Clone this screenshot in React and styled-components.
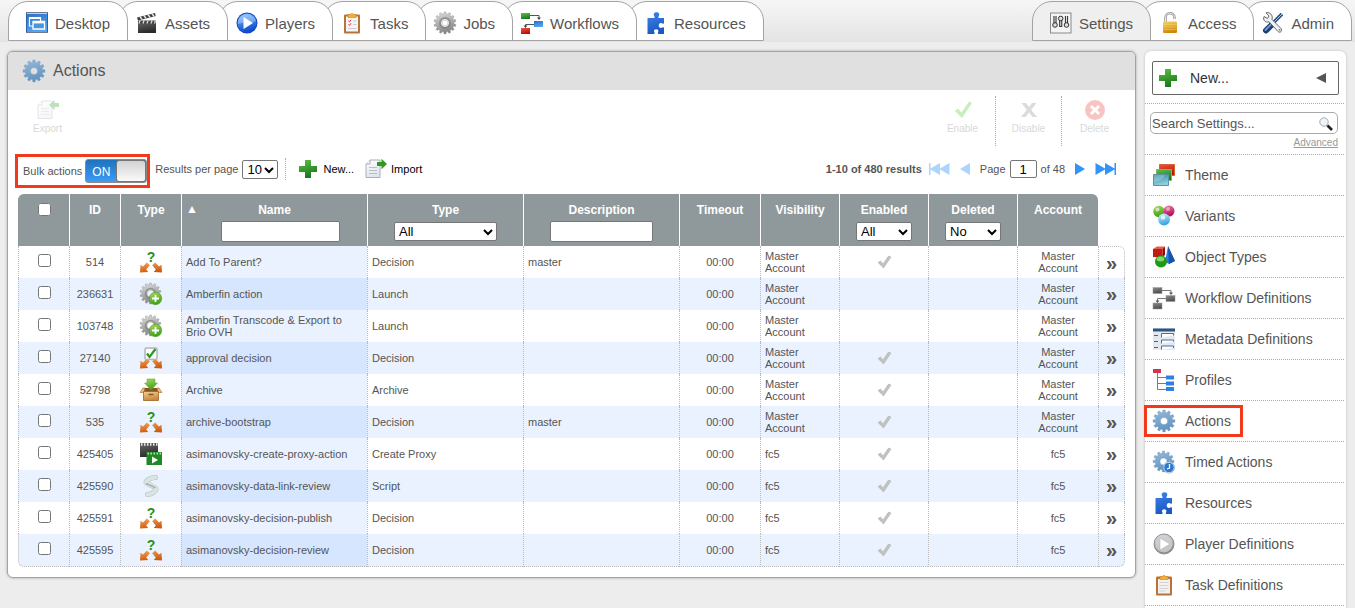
import React, { useState } from 'react';
import styled, { createGlobalStyle, css } from 'styled-components';

const GlobalStyle = createGlobalStyle`
  * {
    box-sizing: border-box;
  }
  body {
    margin: 0;
    background: #ededed;
    color: #555;
    font-family: "Liberation Sans", Arial, sans-serif;
    font-size: 11px;
  }
  button, input, select {
    font-family: inherit;
  }
`;

/* ---------- icons ---------- */

const Svg = styled.svg`
  display: block;
  flex: none;
  overflow: visible;
  width: ${props => props.$w || 22}px;
  height: ${props => props.$h || 22}px;
`;

const gear = (cx, cy, outer, inner, teeth, hole) => {
  const pts = [];
  const step = (Math.PI * 2) / teeth;
  for (let i = 0; i < teeth; i++) {
    const a = i * step - Math.PI / 2;
    [[-0.31, inner], [-0.2, outer], [0.2, outer], [0.31, inner]].forEach(([k, r]) => {
      pts.push(`${(cx + r * Math.cos(a + k * step)).toFixed(2)} ${(cy + r * Math.sin(a + k * step)).toFixed(2)}`);
    });
  }
  return `M${pts.join('L')}Z M${cx - hole} ${cy}a${hole} ${hole} 0 1 0 ${hole * 2} 0a${hole} ${hole} 0 1 0 ${-hole * 2} 0Z`;
};

const gradients = {
  blue: ['#7cc0ff', '#0b4fd0'],
  desk: ['#2f6dc0', '#4fa6f2'],
  steel: ['#9bbbd8', '#5f93c2'],
  silver: ['#e2e2e2', '#868686'],
  green: ['#5cc244', '#1c7a1c'],
  lime: ['#a8dc5a', '#3fa01c'],
  red: ['#f0533f', '#b5120f'],
  gold: ['#f7d560', '#cf8a0c'],
  orange: ['#f4a457', '#cf5a12'],
  dark: ['#6a6a6a', '#2b2b2b'],
  gray: ['#8a8a8a', '#505050'],
  puzzle: ['#3f86ea', '#1b58c4'],
  teal: ['#2f87a3', '#8fd0dc'],
  box: ['#f5cf92', '#c9883d'],
  paper: ['#ffffff', '#dfe5ee'],
  pink: ['#f07fb4', '#b3124f'],
  sky: ['#d4f1ff', '#39a3e4'],
};

const HiddenSvg = styled.svg`
  position: absolute;
`;

const Gradients = () => (
  <HiddenSvg width="0" height="0" aria-hidden="true">
    <defs>
      {Object.entries(gradients).map(([name, [from, to]]) => (
        <linearGradient key={name} id={`g-${name}`} x1="0" y1="0" x2="0.3" y2="1">
          <stop offset="0" stopColor={from} />
          <stop offset="1" stopColor={to} />
        </linearGradient>
      ))}
    </defs>
  </HiddenSvg>
);

const fill = name => `url(#g-${name})`;

// pair of arrows pointing to the lower corners
const splitArrows = (
  <path
    d="M0 21.500l.5-7.800L3 15.500l3.800-4 3 2.800L6.200 18.500l2 2.500zM22 21.500l-.5-7.800-2.500 1.800-3.800-4-3 2.800 3.600 4.200-2 2.500z"
    fill={fill('orange')}
  />
);

const shapes = {
  desktop: (
    <>
      <rect x="0.5" y="0.5" width="21" height="20" fill={fill('desk')} stroke="#2b62a8" />
      <path d="M0 0.5h22M0 20.5h22" stroke="#6d7b8c" />
      <path d="M1 1.5h20" stroke="#b9d4ef" />
      <path d="M3.500 6h11v8h-11z" fill="#3b86d8" stroke="#fff" strokeWidth="1.200" />
      <path d="M3 6h12" stroke="#fff" strokeWidth="2" />
      <path d="M7 9.500h11.500v7.500H7z" fill="#4a94e2" stroke="#fff" strokeWidth="1.300" />
      <path d="M7 10.300h11.500" stroke="#fff" strokeWidth="2.200" />
    </>
  ),
  clapper: (
    <>
      <path d="M2 9h18v12H2z" fill={fill('dark')} />
      <path d="M2 8.500h18v3H2z" fill="#444" />
      <path d="M4 8.500l-1 3M8 8.500l-1 3M12 8.500l-1 3M16 8.500l-1 3M19.500 8.500l-1 3" stroke="#ddd" strokeWidth="1.300" />
      <path d="M1 5.500L19 1l.7 3L2 8.400z" fill="#3c3c3c" />
      <path d="M4 4.700l2 2.600M8 3.700l2 2.600M12 2.700l2 2.600M16 1.700l2 2.600" stroke="#e8e8e8" strokeWidth="1.400" />
    </>
  ),
  play: (
    <>
      <circle cx="11" cy="11" r="10.500" fill="#1746c8" />
      <circle cx="11" cy="11" r="9.500" fill={fill('blue')} />
      <path d="M2 12a9 8 0 0 1 18-3c-4 3-10 0-18 3z" fill="#fff" opacity="0.3" />
      <path d="M7.500 5l9.500 6-9.500 6z" fill="#fff" />
    </>
  ),
  playGray: (
    <>
      <circle cx="11" cy="11" r="10" fill={fill('silver')} stroke="#8b9095" />
      <circle cx="11" cy="11" r="8.500" fill="#cfd2d5" opacity="0.800" />
      <path d="M7 5l10 6-10 6z" fill="#fff" stroke="#aaa" strokeWidth="0.500" />
    </>
  ),
  tasks: (
    <>
      <rect x="3" y="2.500" width="16" height="19" rx="1" fill="#b9733a" />
      <rect x="5" y="4.500" width="12" height="15" fill="#f4f4f4" />
      <path d="M7 2.500h2.500a1.600 1.600 0 0 1 3 0H15v3H7z" fill="#f0b13c" stroke="#c98516" strokeWidth="0.600" />
      <path d="M7.500 9l1 .8 1.500-2M7.500 12.500l1 .8 1.500-2" fill="none" stroke="#e23" />
      <path d="M12 9h3.500M12 12.500h3.500M7 16.500h8.500" stroke="#ccc" />
    </>
  ),
  clipboard: (
    <>
      <rect x="3" y="2.500" width="16" height="19" rx="1" fill="#b9733a" />
      <rect x="5" y="5" width="12" height="14.500" fill="#f1f1f1" />
      <path d="M7 2.500h2.500a1.600 1.600 0 0 1 3 0H15v3H7z" fill="#f0b13c" stroke="#c98516" strokeWidth="0.600" />
      <path d="M6.500 8.500h9M6.500 11.500h9M6.500 14.500h9M6.500 17h6" stroke="#d3d3d3" />
    </>
  ),
  jobs: (
    <>
      <path d={gear(11, 11, 11, 9, 14, 3)} fill={fill('silver')} fillRule="evenodd" stroke="#8a8a8a" strokeWidth="0.400" />
      <circle cx="11" cy="11" r="5" fill="none" stroke="#777" strokeWidth="2" opacity="0.600" />
      <circle cx="11" cy="11" r="3.500" fill="none" stroke="#eee" />
    </>
  ),
  workflow: (
    <>
      <rect x="0" y="1" width="9" height="6" fill={fill('green')} />
      <rect x="13" y="9" width="9" height="6" fill={fill('desk')} />
      <rect x="0" y="16" width="9" height="6" fill={fill('red')} />
      <path d="M9 3.500h9v3M13 12.500H4.500v2" fill="none" stroke="#555" />
      <path d="M16 5.500h4l-2 2.500zM2.500 13.500h4l-2 2.500z" fill="#444" />
    </>
  ),
  workflowGray: (
    <>
      <rect x="0" y="0.500" width="9" height="6" fill={fill('gray')} stroke="#999" strokeWidth="0.500" />
      <rect x="13" y="8.500" width="9" height="6" fill={fill('gray')} stroke="#999" strokeWidth="0.500" />
      <rect x="0" y="16" width="9" height="6" fill={fill('gray')} stroke="#999" strokeWidth="0.500" />
      <path d="M9 3.500h9v3M13 11.500H4.500v3" fill="none" stroke="#777" />
      <path d="M16 5.500h4l-2 2.500zM2.500 13.500h4l-2 2.500z" fill="#555" />
    </>
  ),
  puzzle: (
    <path
      d="M2.500 6H9c.8 0 .8-.8.300-1.600C8 2 9 .2 11.500.2S15 2 13.700 4.400c-.5.800-.5 1.600.3 1.600h5v5c0 .9-.9.900-1.700.4-1.800-1-3.600-.1-3.600 2.100s1.800 3 3.600 2.100c.8-.5 1.700-.5 1.700.4V22h-5.500c-.9 0-.9-.9-.4-1.700.8-1.700-.2-3-1.900-3s-2.700 1.300-1.900 3c.5.800.5 1.700-.4 1.700H2.500z"
      fill={fill('puzzle')}
    />
  ),
  settings: (
    <>
      <rect x="0.500" y="1" width="20.500" height="20" fill="#f4f4f4" stroke="#8a8a8a" />
      <path d="M5 4v9M10.700 5v10M16.500 4v9" stroke="#3c3c3c" strokeWidth="3.200" />
      <path d="M5 4v8M10.700 8v6M16.500 4v8" stroke="#ddd" />
      <circle cx="5" cy="13" r="2.300" fill="#ddd" stroke="#333" />
      <circle cx="10.700" cy="6.500" r="2.300" fill="#ddd" stroke="#333" />
      <circle cx="16.500" cy="13" r="2.300" fill="#ddd" stroke="#333" />
    </>
  ),
  lock: (
    <>
      <path d="M6.500 10V6a4.500 4.500 0 0 1 9-.5V7" fill="none" stroke="#999" strokeWidth="2.600" />
      <path d="M6.500 10V6a4.500 4.500 0 0 1 9-.5V7" fill="none" stroke="#e8e8e8" strokeWidth="1" />
      <rect x="4" y="9.500" width="14" height="11.500" rx="1" fill={fill('gold')} />
      <path d="M4 12.500h14M4 15h14M4 17.500h14" stroke="#fbe38c" strokeWidth="0.500" opacity="0.700" />
    </>
  ),
  tools: (
    <>
      <path d="M20 2l-8 8" stroke="#274f86" strokeWidth="3.500" />
      <path d="M20 2l-8 8" stroke="#a9c4e6" strokeWidth="1" />
      <path d="M10 12.500l-6 6" stroke="#1d3f76" strokeWidth="6" strokeLinecap="round" />
      <path d="M9.500 12l-6 6" stroke="#6f98cf" strokeWidth="1.800" strokeLinecap="round" />
      <path d="M4 .8L7 4 5.500 6.500 2 4.500C.5 8 3.500 11 7 9.800l9 9.700c2 2 5-.7 3-3l-9-9C11.200 3.500 8-.5 4 .8z" fill="#f1f1f1" stroke="#555" strokeWidth="0.900" />
      <circle cx="17.600" cy="17.800" r="0.900" fill="#777" />
    </>
  ),
  gear: <path d={gear(11, 11, 11, 8.7, 12, 3.6)} fill={fill('steel')} fillRule="evenodd" stroke="#6f97bb" strokeWidth="0.400" />,
  timedGear: (
    <>
      <path d={gear(10.5, 10.5, 10.5, 8.3, 12, 3.5)} fill={fill('steel')} fillRule="evenodd" stroke="#6f97bb" strokeWidth="0.400" />
      <circle cx="16" cy="16.500" r="5.300" fill="#2c78cf" stroke="#fff" />
      <circle cx="16" cy="16.500" r="5.600" fill="none" stroke="#5c90c8" strokeWidth="0.600" />
      <path d="M16.500 13v4l-2.500 1" fill="none" stroke="#fff" strokeWidth="1.300" />
    </>
  ),
  theme: (
    <>
      <path d="M6.500 .5h15v11h-15z" fill={fill('red')} stroke="#d9622f" />
      <path d="M3.500 5.500h15v11h-15z" fill={fill('green')} stroke="#8ab54e" />
      <path d="M.5 10.500h15v11H.5z" fill={fill('teal')} stroke="#5a93a3" />
      <path d="M1 18c5-1 9-3 11-7H1z" fill="#fff" opacity="0.250" />
    </>
  ),
  variants: (
    <>
      <circle cx="6" cy="6.500" r="5.800" fill={fill('lime')} />
      <circle cx="16" cy="6" r="5.500" fill={fill('pink')} />
      <circle cx="11" cy="14.500" r="5.900" fill={fill('sky')} />
      <circle cx="4.500" cy="4.500" r="2" fill="#fff" opacity="0.600" />
      <circle cx="15" cy="4" r="2" fill="#fff" opacity="0.450" />
      <circle cx="10" cy="12.500" r="2.200" fill="#fff" opacity="0.700" />
    </>
  ),
  objects: (
    <>
      <path d="M15 0l7 15-6 3-4-2z" fill="#2f7de0" />
      <path d="M15 0l7 15-6 3z" fill="#1453ae" />
      <path d="M0 3l4-2.500h8L9.500 3z" fill="#ee5a4a" />
      <path d="M0 3h9.500v8H0z" fill="#c41a17" />
      <path d="M9.500 3L12 .5V9l-2.500 2z" fill="#8e0d0b" />
      <circle cx="8" cy="15.500" r="6" fill="#1f9a17" />
      <ellipse cx="7.500" cy="13" rx="3.800" ry="2.500" fill="#a6f38a" opacity="0.700" />
    </>
  ),
  metadata: (
    <>
      <rect x="0" y="0" width="22" height="22" fill="#e3e9f1" />
      <path d="M0 2h22" stroke="#2f5483" strokeWidth="3" />
      <path d="M1 7.500h4M1 13.500h4M1 19.500h4" stroke="#4a6284" strokeWidth="1.200" />
      <path d="M8.500 9.500v-4h12v2M8.500 15.500v-3.500h12v1.500M8.500 21.500v-3.500h12v2" fill="#fff" stroke="#4d6c96" />
    </>
  ),
  profiles: (
    <>
      <path d="M4.500 4v16.500H13M4.500 8.500H13M4.500 14.500H13" fill="none" stroke="#8b6f88" />
      <rect x="0" y="0" width="8" height="4" fill="#d23552" />
      <rect x="13" y="6.500" width="8" height="4" fill="#2b82e6" />
      <rect x="13" y="12.500" width="8" height="4" fill="#2b82e6" />
      <rect x="13" y="18" width="8" height="4" fill="#2b82e6" />
    </>
  ),
  export: (
    <>
      <path d="M1 6l4-4h10v17.500H1z" fill={fill('paper')} stroke="#a8aeb8" />
      <path d="M1 6h4V2" fill="#fff" stroke="#a8aeb8" />
      <path d="M4 9.500h8M4 12.500h8M4 15.500h8" stroke="#b8bec8" />
      <path d="M22 4v4h-4.500v3L12 6l5.500-5v3z" fill="#2f9a1e" />
    </>
  ),
  import: (
    <>
      <path d="M1 6l4-4h10v17.500H1z" fill={fill('paper')} stroke="#a8aeb8" />
      <path d="M1 6h4V2" fill="#fff" stroke="#a8aeb8" />
      <path d="M4 9.500h8M4 12.500h8M4 15.500h8" stroke="#b8bec8" />
      <path d="M12 4h4.500V.8L22 6l-5.500 5.200V8H12z" fill="#2f9a1e" />
    </>
  ),
  enable: <path d="M3 12l3-2.500 3.500 4L17 2.500l3 1.500L10 19z" fill="#4cc81e" />,
  disable: <path d="M3.500 4h4.500l3 4 3-4h4.500L13.200 11l5.800 7h-4.500L11 13.500 7.500 18H3l5.800-7z" fill="#888" />,
  delete: (
    <>
      <circle cx="11" cy="11" r="10" fill="#e8403a" />
      <path d="M7 7l8 8M15 7l-8 8" stroke="#fff" strokeWidth="3" />
    </>
  ),
  plus: <path d="M8 2h6v6h6v6h-6v6H8v-6H2V8h6z" fill={fill('green')} />,
  check: <path d="M1 7.500L3.500 6 6 9l5.500-8L14 2 6.500 13z" fill="#c2c2c2" stroke="#aaa" strokeWidth="0.500" />,
  decision: (
    <>
      <text x="11" y="11" textAnchor="middle" fontFamily="Liberation Sans, sans-serif" fontWeight="bold" fontSize="14" fill="#2a8f22">?</text>
      {splitArrows}
    </>
  ),
  approval: (
    <>
      {splitArrows}
      <rect x="5" y="1" width="12" height="11.500" rx="1.500" fill="#fafafa" stroke="#b5b5b5" strokeWidth="1.500" />
      <path d="M7 6.500l2.500 3.500L15.500 2" fill="none" stroke="#2a9a22" strokeWidth="2.200" />
    </>
  ),
  launch: (
    <>
      <path d={gear(10.5, 10.5, 10.5, 8.5, 14, 3.5)} fill={fill('silver')} fillRule="evenodd" stroke="#8a8a8a" strokeWidth="0.400" />
      <circle cx="10.500" cy="10.500" r="5" fill="none" stroke="#777" strokeWidth="1.600" opacity="0.600" />
      <circle cx="15.500" cy="15.500" r="6.200" fill={fill('lime')} stroke="#4a9e25" strokeWidth="0.600" />
      <path d="M15.500 12v7M12 15.500h7" stroke="#fff" strokeWidth="1.800" />
    </>
  ),
  archive: (
    <>
      <path d="M3 9h16v4.500H3z" fill="#8a5520" />
      <path d="M7 0h8v4h2.500L11 11 4.500 4H7z" fill={fill('lime')} stroke="#5a9e3c" strokeWidth="0.500" />
      <path d="M0 13.500L3 9h2l-1 4.500zM22 13.500L19 9h-2l1 4.500z" fill="#eebf7c" stroke="#9c6425" strokeWidth="0.600" />
      <path d="M3.500 12.500h15v9h-15z" fill={fill('box')} stroke="#9c6425" strokeWidth="0.800" />
      <path d="M8.500 15.500h5" stroke="#8a5520" strokeWidth="1.500" />
    </>
  ),
  proxy: (
    <>
      <path d="M0 0h18v14H0z" fill={fill('dark')} />
      <path d="M1 1.500h17" stroke="#e5e5e5" strokeWidth="2.400" strokeDasharray="1.500 1.500" />
      <path d="M6.500 9H22v13H6.500z" fill="#1f8a25" />
      <path d="M7.500 10.500H22" stroke="#a8e6a0" strokeWidth="2" strokeDasharray="1.500 1.500" />
      <path d="M12 13.500l6 3.500-6 3.500z" fill="#fff" />
    </>
  ),
  script: (
    <>
      <path d="M15.500 2.500C11 2.500 6 5.500 6 7.500c0 1.500 10 4 10 6.500 0 2-4 5-8.500 5.500" fill="none" stroke="#b4c0c0" strokeWidth="5" strokeLinecap="round" />
      <path d="M15.500 2.500C11 2.500 6 5.500 6 7.500c0 1.500 10 4 10 6.500 0 2-4 5-8.500 5.500" fill="none" stroke="#dbe3e3" strokeWidth="4" strokeLinecap="round" />
      <path d="M6 8.500c3 1.500 6 2 9.500 4.500" fill="none" stroke="#9fadad" strokeWidth="1.500" />
    </>
  ),
  lens: (
    <>
      <circle cx="6" cy="6" r="4.200" fill="#eef4f8" stroke="#aaa" />
      <path d="M8.500 9l2 2" stroke="#888" />
      <path d="M9.500 9.500l4.500 4.500" stroke="#222" strokeWidth="2.600" />
    </>
  ),
};

const Icon = ({ name, size = 22, box = 22 }) => (
  <Svg $w={size} $h={size} viewBox={`0 0 ${box} ${box}`} aria-hidden="true">{shapes[name]}</Svg>
);

/* ---------- top tabs ---------- */

const TopBar = styled.nav`
  display: flex;
  justify-content: space-between;
  height: 42px;
  padding: 1px 3px 0 8px;
  background: linear-gradient(#f6f6f6, #e4e4e4);
`;
const TabGroup = styled.div`
  display: flex;
`;
const Tab = styled.a`
  display: flex;
  align-items: center;
  gap: 7px;
  height: 40px;
  padding: 4px 17px 0;
  border: 1px solid #a3a3a3;
  border-radius: 20px 20px 0 0;
  background: ${props => (props.$active ? '#efefef' : '#fff')};
  color: #555;
  font-size: 15px;
  text-decoration: none;
  z-index: ${props => props.$level};
  & + & {
    margin-left: -10px;
  }
`;

/* ---------- layout ---------- */

const Columns = styled.div`
  display: flex;
  gap: 9px;
  min-height: calc(100vh - 42px);
  padding: 9px 9px 0 7px;
`;
const Panel = styled.main`
  flex: 1;
  align-self: flex-start;
  min-width: 0;
  border: 1px solid #a3a3a3;
  border-radius: 6px;
  background: #fff;
  box-shadow: 0 0 3px rgba(0, 0, 0, 0.3);
`;
const PanelHeader = styled.header`
  display: flex;
  align-items: center;
  gap: 8px;
  height: 38px;
  padding-left: 15px;
  border-radius: 5px 5px 0 0;
  background: #e0e0e0;
`;
const Title = styled.h1`
  margin: 0;
  font-size: 16px;
  font-weight: normal;
`;

/* ---------- bulk toolbar ---------- */

const Toolbar = styled.div`
  display: flex;
  justify-content: space-between;
  padding: 6px 7px 8px;
`;
const ToolGroup = styled.div`
  display: flex;
`;
const ToolButton = styled.button`
  display: flex;
  flex-direction: column;
  align-items: center;
  width: 66px;
  height: 50px;
  padding: 3px 0 0;
  border: none;
  border-right: 1px ${props => (props.$divider ? 'dotted #aaa' : 'solid transparent')};
  background: none;
  color: #d8d8d8;
  font-size: 10px;
  line-height: 16px;
  svg {
    opacity: 0.3;
  }
`;

/* ---------- selects ---------- */

const filterBox = css`
  border: 1px solid #767676;
  border-radius: 2px;
  background: #fff;
  color: #000;
  font-size: 13px;
`;
const SelectWrap = styled.span`
  position: relative;
  display: block;
  width: ${props => props.$width}px;
  svg {
    position: absolute;
    top: 7px;
    right: 4px;
    pointer-events: none;
  }
`;
const SelectBox = styled.select`
  ${filterBox}
  display: block;
  width: 100%;
  height: 19px;
  padding: 0 0 0 4px;
  appearance: none;
`;

const Select = ({ width, options, ...rest }) => (
  <SelectWrap $width={width}>
    <SelectBox {...rest}>
      {options.map(option => <option key={option}>{option}</option>)}
    </SelectBox>
    <Svg $w={10} $h={6} viewBox="0 0 10 6">
      <path d="M1 1l4 4 4-4" fill="none" stroke="#000" strokeWidth="2" />
    </Svg>
  </SelectWrap>
);

/* ---------- options row ---------- */

const Options = styled.div`
  display: flex;
  align-items: flex-start;
  gap: 5px;
  padding: 0 19px 6px 7px;
`;
const BulkBox = styled.div`
  display: flex;
  align-items: center;
  gap: 3px;
  height: 34px;
  padding-left: 5px;
  border: 3px solid #f13a1c;
  white-space: nowrap;
`;
const Switch = styled.label`
  display: flex;
  position: relative;
  width: 62px;
  height: 24px;
  border: 1px solid #8a8a8a;
  border-radius: 3px;
  background: ${props => (props.$on ? 'linear-gradient(#1f72bd, #3d9cf5)' : '#eee')};
  color: ${props => (props.$on ? '#fff' : '#666')};
  flex-direction: ${props => (props.$on ? 'row' : 'row-reverse')};
  input {
    position: absolute;
    inset: 0;
    margin: 0;
    opacity: 0;
  }
`;
const SwitchText = styled.span`
  flex: 1;
  font-size: 12px;
  line-height: 25px;
  text-align: center;
`;
const Knob = styled.span`
  width: 30px;
  border: 1px solid #777;
  border-radius: 3px;
  background: linear-gradient(#d2d2d2, #fafafa);
`;
const OptionGroup = styled.div`
  display: flex;
  align-items: center;
  gap: ${props => props.$gap}px;
  height: 30px;
  white-space: nowrap;
`;
const Divider = styled.span`
  height: 22px;
  margin-left: 2px;
  border-left: 1px dotted #aaa;
`;
const LinkButton = styled.button`
  display: flex;
  align-items: center;
  gap: 4px;
  padding: 0;
  border: none;
  background: none;
  color: #000;
  font-size: 11px;
`;
const Pager = styled(OptionGroup)`
  margin-left: auto;
`;
const Results = styled.strong`
  margin-right: -3px;
`;
const PageField = styled.label`
  display: flex;
  align-items: center;
  gap: 4px;
  input {
    width: 27px;
    height: 18px;
    padding: 0;
    border: 1px solid #767676;
    border-radius: 2px;
    font-size: 13px;
    text-align: center;
  }
`;
const ArrowButton = styled.button`
  padding: 0;
  border: none;
  background: none;
  color: #3393fb;
  &:disabled {
    color: #add4fd;
  }
`;

/* ---------- table ---------- */

const TableWrap = styled.div`
  padding: 0 10px 10px;
`;
const Table = styled.table`
  width: 100%;
  table-layout: fixed;
  border-collapse: separate;
  border-spacing: 0;
`;
const Th = styled.th`
  height: 52px;
  padding: 8px 4px 0;
  border-left: 1px solid #fff;
  background: #8f999b;
  color: #fff;
  font-size: 12px;
  line-height: 16px;
  vertical-align: top;
  &:first-child {
    border-left-color: #8f999b;
    border-top-left-radius: 6px;
  }
  &:nth-last-child(2) {
    border-top-right-radius: 6px;
  }
  &:last-child {
    border-left: none;
    background: none;
  }
`;
const SortGrid = styled.div`
  display: grid;
  grid-template-columns: 12px 1fr;
  row-gap: 3px;
`;
const SortArrow = styled.span`
  grid-area: 1 / 1;
  font-size: 12px;
  line-height: 14px;
`;
const SortTitle = styled.span`
  grid-area: 1 / 1 / 2 / 3;
`;
const FilterInput = styled.input`
  ${filterBox}
  width: ${props => props.$width}px;
  height: 21px;
  padding: 1px 2px;
`;
const NameFilter = styled(FilterInput)`
  grid-area: 2 / 2;
  justify-self: center;
`;
const FilterRow = styled.div`
  display: flex;
  align-items: center;
  justify-content: center;
  height: 21px;
  margin-top: 3px;
`;
const Checkbox = styled.input`
  display: block;
  width: 13px;
  height: 13px;
  margin: 1px auto 4px;
`;
const Td = styled.td`
  height: 32px;
  padding: 0 4px;
  border-left: 1px dotted #bbb;
  line-height: 12px;
  text-align: ${props => (props.$center ? 'center' : 'left')};
  svg {
    margin: 0 auto;
  }
`;
const NameTd = styled(Td)`
  background: #e9f2fe;
`;
const MoreTd = styled(Td)`
  padding: 0;
  border-right: 1px dotted #bbb;
`;
const MoreButton = styled.button`
  display: block;
  width: 100%;
  padding: 0;
  border: none;
  background: none;
  color: #555;
  font-size: 20px;
  font-weight: bold;
  line-height: 24px;
`;
const Row = styled.tr`
  &:nth-child(even) {
    background: #e9f2fe;
  }
  &:nth-child(even) ${NameTd} {
    background: #d5e6fe;
  }
  &:first-child ${MoreTd} {
    border-top: 1px dotted #bbb;
    border-top-right-radius: 6px;
  }
  &:last-child td {
    height: 33px;
    border-bottom: 1px dotted #bbb;
  }
  &:last-child td:first-child {
    border-bottom-left-radius: 6px;
  }
  &:last-child td:last-child {
    border-bottom-right-radius: 6px;
  }
`;

/* ---------- sidebar ---------- */

const Sidebar = styled.aside`
  flex: 0 0 201px;
  min-width: 0;
  border-radius: 6px 6px 0 0;
  background: #fff;
  box-shadow: 0 0 3px rgba(0, 0, 0, 0.2);
`;
const SideSection = styled.div`
  margin-right: 2px;
  border-bottom: 1px dotted #aaa;
`;
const NewSection = styled(SideSection)`
  padding: 10px 5px 8px 7px;
`;
const NewMenu = styled.button`
  display: flex;
  align-items: center;
  gap: 11px;
  width: 100%;
  height: 34px;
  padding: 0 12px 0 4px;
  border: 1px solid #666;
  border-radius: 2px;
  background: #fff;
  color: #333;
  font-size: 14px;
  svg:last-child {
    margin-left: auto;
  }
`;
const SearchSection = styled(SideSection)`
  padding: 8px 6px 4px 5px;
  text-align: right;
`;
const SearchBox = styled.div`
  display: flex;
  align-items: center;
  height: 22px;
  padding-right: 4px;
  border: 1px solid #aaa;
  border-radius: 5px;
`;
const SearchInput = styled.input`
  flex: 1;
  width: 100%;
  min-width: 0;
  padding: 0 1px;
  border: none;
  background: none;
  outline: none;
  font-size: 13px;
  &::placeholder {
    color: #555;
    opacity: 1;
  }
`;
const Advanced = styled.a`
  display: block;
  margin-top: 2px;
  color: #999;
  font-size: 10px;
  line-height: 14px;
`;
const SideList = styled.ul`
  margin: 0;
  padding: 0 2px 2px 0;
  list-style: none;
`;
const SideItem = styled.li`
  display: flex;
  align-items: center;
  height: 41px;
  padding-left: 2px;
  border-bottom: 1px dotted #aaa;
`;
const SideLink = styled.a`
  display: flex;
  align-items: center;
  gap: 10px;
  height: 26px;
  padding: 0 9px 0 6px;
  color: #555;
  font-size: 14px;
  text-decoration: none;
  white-space: nowrap;
  outline: ${props => (props.$active ? '3px solid #f13a1c' : 'none')};
`;

/* ---------- data ---------- */

const mainTabs = [
  ['Desktop', 'desktop'],
  ['Assets', 'clapper'],
  ['Players', 'play'],
  ['Tasks', 'tasks'],
  ['Jobs', 'jobs'],
  ['Workflows', 'workflow'],
  ['Resources', 'puzzle'],
];

const adminTabs = [
  ['Settings', 'settings'],
  ['Access', 'lock'],
  ['Admin', 'tools'],
];

const sideItems = [
  ['Theme', 'theme'],
  ['Variants', 'variants'],
  ['Object Types', 'objects'],
  ['Workflow Definitions', 'workflowGray'],
  ['Metadata Definitions', 'metadata'],
  ['Profiles', 'profiles'],
  ['Actions', 'gear'],
  ['Timed Actions', 'timedGear'],
  ['Resources', 'puzzle'],
  ['Player Definitions', 'playGray'],
  ['Task Definitions', 'clipboard'],
];

const columnWidths = [51, 51, 61, 186, 156, 156, 81, 79, 89, 89, 81, 27];

const rows = [
  { id: 514, icon: 'decision', name: 'Add To Parent?', type: 'Decision', description: 'master', account: 'Master Account', enabled: true },
  { id: 236631, icon: 'launch', name: 'Amberfin action', type: 'Launch', account: 'Master Account' },
  { id: 103748, icon: 'launch', name: 'Amberfin Transcode & Export to Brio OVH', type: 'Launch', account: 'Master Account' },
  { id: 27140, icon: 'approval', name: 'approval decision', type: 'Decision', account: 'Master Account', enabled: true },
  { id: 52798, icon: 'archive', name: 'Archive', type: 'Archive', account: 'Master Account', enabled: true },
  { id: 535, icon: 'decision', name: 'archive-bootstrap', type: 'Decision', description: 'master', account: 'Master Account', enabled: true },
  { id: 425405, icon: 'proxy', name: 'asimanovsky-create-proxy-action', type: 'Create Proxy', account: 'fc5', enabled: true },
  { id: 425590, icon: 'script', name: 'asimanovsky-data-link-review', type: 'Script', account: 'fc5', enabled: true },
  { id: 425591, icon: 'decision', name: 'asimanovsky-decision-publish', type: 'Decision', account: 'fc5', enabled: true },
  { id: 425595, icon: 'decision', name: 'asimanovsky-decision-review', type: 'Decision', account: 'fc5', enabled: true },
];

/* ---------- components ---------- */

const Tabs = ({ items, active }) => (
  <TabGroup>
    {items.map(([label, icon], i) => (
      <Tab key={label} href="#" $active={label === active} $level={items.length - i}>
        <Icon name={icon} />
        {label}
      </Tab>
    ))}
  </TabGroup>
);

const Arrow = ({ label, d, width = 10, disabled }) => (
  <ArrowButton aria-label={label} disabled={disabled}>
    <Svg $w={width} $h={12} viewBox={`0 0 ${width} 12`}><path d={d} fill="currentColor" /></Svg>
  </ArrowButton>
);

const FilterSelect = ({ label, width, options }) => (
  <FilterRow>
    <Select aria-label={label} width={width} options={options} />
  </FilterRow>
);

const ActionsTable = () => (
  <Table>
    <colgroup>
      {columnWidths.map((width, i) => <col key={i} width={width} />)}
    </colgroup>
    <thead>
      <tr>
        <Th><Checkbox type="checkbox" aria-label="Select all" /></Th>
        <Th>ID</Th>
        <Th>Type</Th>
        <Th>
          <SortGrid>
            <SortArrow>▲</SortArrow>
            <SortTitle>Name</SortTitle>
            <NameFilter aria-label="Filter by name" $width={119} />
          </SortGrid>
        </Th>
        <Th>Type<FilterSelect label="Filter by type" width={103} options={['All', 'Decision', 'Launch', 'Archive', 'Script']} /></Th>
        <Th>Description<FilterRow><FilterInput aria-label="Filter by description" $width={103} /></FilterRow></Th>
        <Th>Timeout</Th>
        <Th>Visibility</Th>
        <Th>Enabled<FilterSelect label="Filter by enabled" width={56} options={['All', 'Yes', 'No']} /></Th>
        <Th>Deleted<FilterSelect label="Filter by deleted" width={56} options={['No', 'Yes', 'All']} /></Th>
        <Th>Account</Th>
        <Th />
      </tr>
    </thead>
    <tbody>
      {rows.map(row => (
        <Row key={row.id}>
          <Td><Checkbox type="checkbox" aria-label={`Select ${row.name}`} /></Td>
          <Td $center>{row.id}</Td>
          <Td><Icon name={row.icon} /></Td>
          <NameTd>{row.name}</NameTd>
          <Td>{row.type}</Td>
          <Td>{row.description}</Td>
          <Td $center>00:00</Td>
          <Td>{row.account}</Td>
          <Td>{row.enabled && <Icon name="check" size={14} box={14} />}</Td>
          <Td />
          <Td $center>{row.account}</Td>
          <MoreTd><MoreButton aria-label={`More for ${row.name}`}>»</MoreButton></MoreTd>
        </Row>
      ))}
    </tbody>
  </Table>
);

export default function App() {
  const [bulk, setBulk] = useState(true);

  return (
    <>
      <GlobalStyle />
      <Gradients />
      <TopBar>
        <Tabs items={mainTabs} />
        <Tabs items={adminTabs} active="Settings" />
      </TopBar>
      <Columns>
        <Panel>
          <PanelHeader>
            <Icon name="gear" />
            <Title>Actions</Title>
          </PanelHeader>
          <Toolbar>
            <ToolButton disabled><Icon name="export" />Export</ToolButton>
            <ToolGroup>
              <ToolButton disabled $divider><Icon name="enable" />Enable</ToolButton>
              <ToolButton disabled $divider><Icon name="disable" />Disable</ToolButton>
              <ToolButton disabled><Icon name="delete" />Delete</ToolButton>
            </ToolGroup>
          </Toolbar>
          <Options>
            <BulkBox>
              <label htmlFor="bulk">Bulk actions</label>
              <Switch $on={bulk}>
                <input id="bulk" type="checkbox" checked={bulk} onChange={e => setBulk(e.target.checked)} />
                <SwitchText>{bulk ? 'ON' : 'OFF'}</SwitchText>
                <Knob />
              </Switch>
            </BulkBox>
            <OptionGroup $gap={4}>
              <label htmlFor="per-page">Results per page</label>
              <Select id="per-page" width={36} options={['10', '20', '50']} />
            </OptionGroup>
            <OptionGroup $gap={11}>
              <Divider />
              <LinkButton><Icon name="plus" />New...</LinkButton>
              <LinkButton><Icon name="import" />Import</LinkButton>
            </OptionGroup>
            <Pager $gap={10}>
              <Results>1-10 of 480 results</Results>
              <Arrow label="First page" width={21} disabled d="M0 0h1.500v5.500L11 0v5.500L20.500 0v12L11 6.500V12L1.500 6.500V12H0z" />
              <Arrow label="Previous page" disabled d="M10 0v12L0 6z" />
              <PageField>
                Page
                <input defaultValue="1" />
                of 48
              </PageField>
              <Arrow label="Next page" d="M0 0v12l10-6z" />
              <Arrow label="Last page" width={21} d="M21 0h-1.500v5.500L10 0v5.500L.5 0v12L10 6.500V12l9.500-5.500V12H21z" />
            </Pager>
          </Options>
          <TableWrap>
            <ActionsTable />
          </TableWrap>
        </Panel>
        <Sidebar>
          <NewSection>
            <NewMenu>
              <Icon name="plus" />
              New...
              <Svg $w={10} $h={10} viewBox="0 0 10 10"><path d="M10 0v10L0 5z" fill="#555" /></Svg>
            </NewMenu>
          </NewSection>
          <SearchSection>
            <SearchBox>
              <SearchInput placeholder="Search Settings..." aria-label="Search Settings" />
              <Icon name="lens" size={15} box={15} />
            </SearchBox>
            <Advanced href="#">Advanced</Advanced>
          </SearchSection>
          <SideList>
            {sideItems.map(([label, icon]) => (
              <SideItem key={label}>
                <SideLink href="#" $active={label === 'Actions'}>
                  <Icon name={icon} />
                  {label}
                </SideLink>
              </SideItem>
            ))}
          </SideList>
        </Sidebar>
      </Columns>
    </>
  );
}
